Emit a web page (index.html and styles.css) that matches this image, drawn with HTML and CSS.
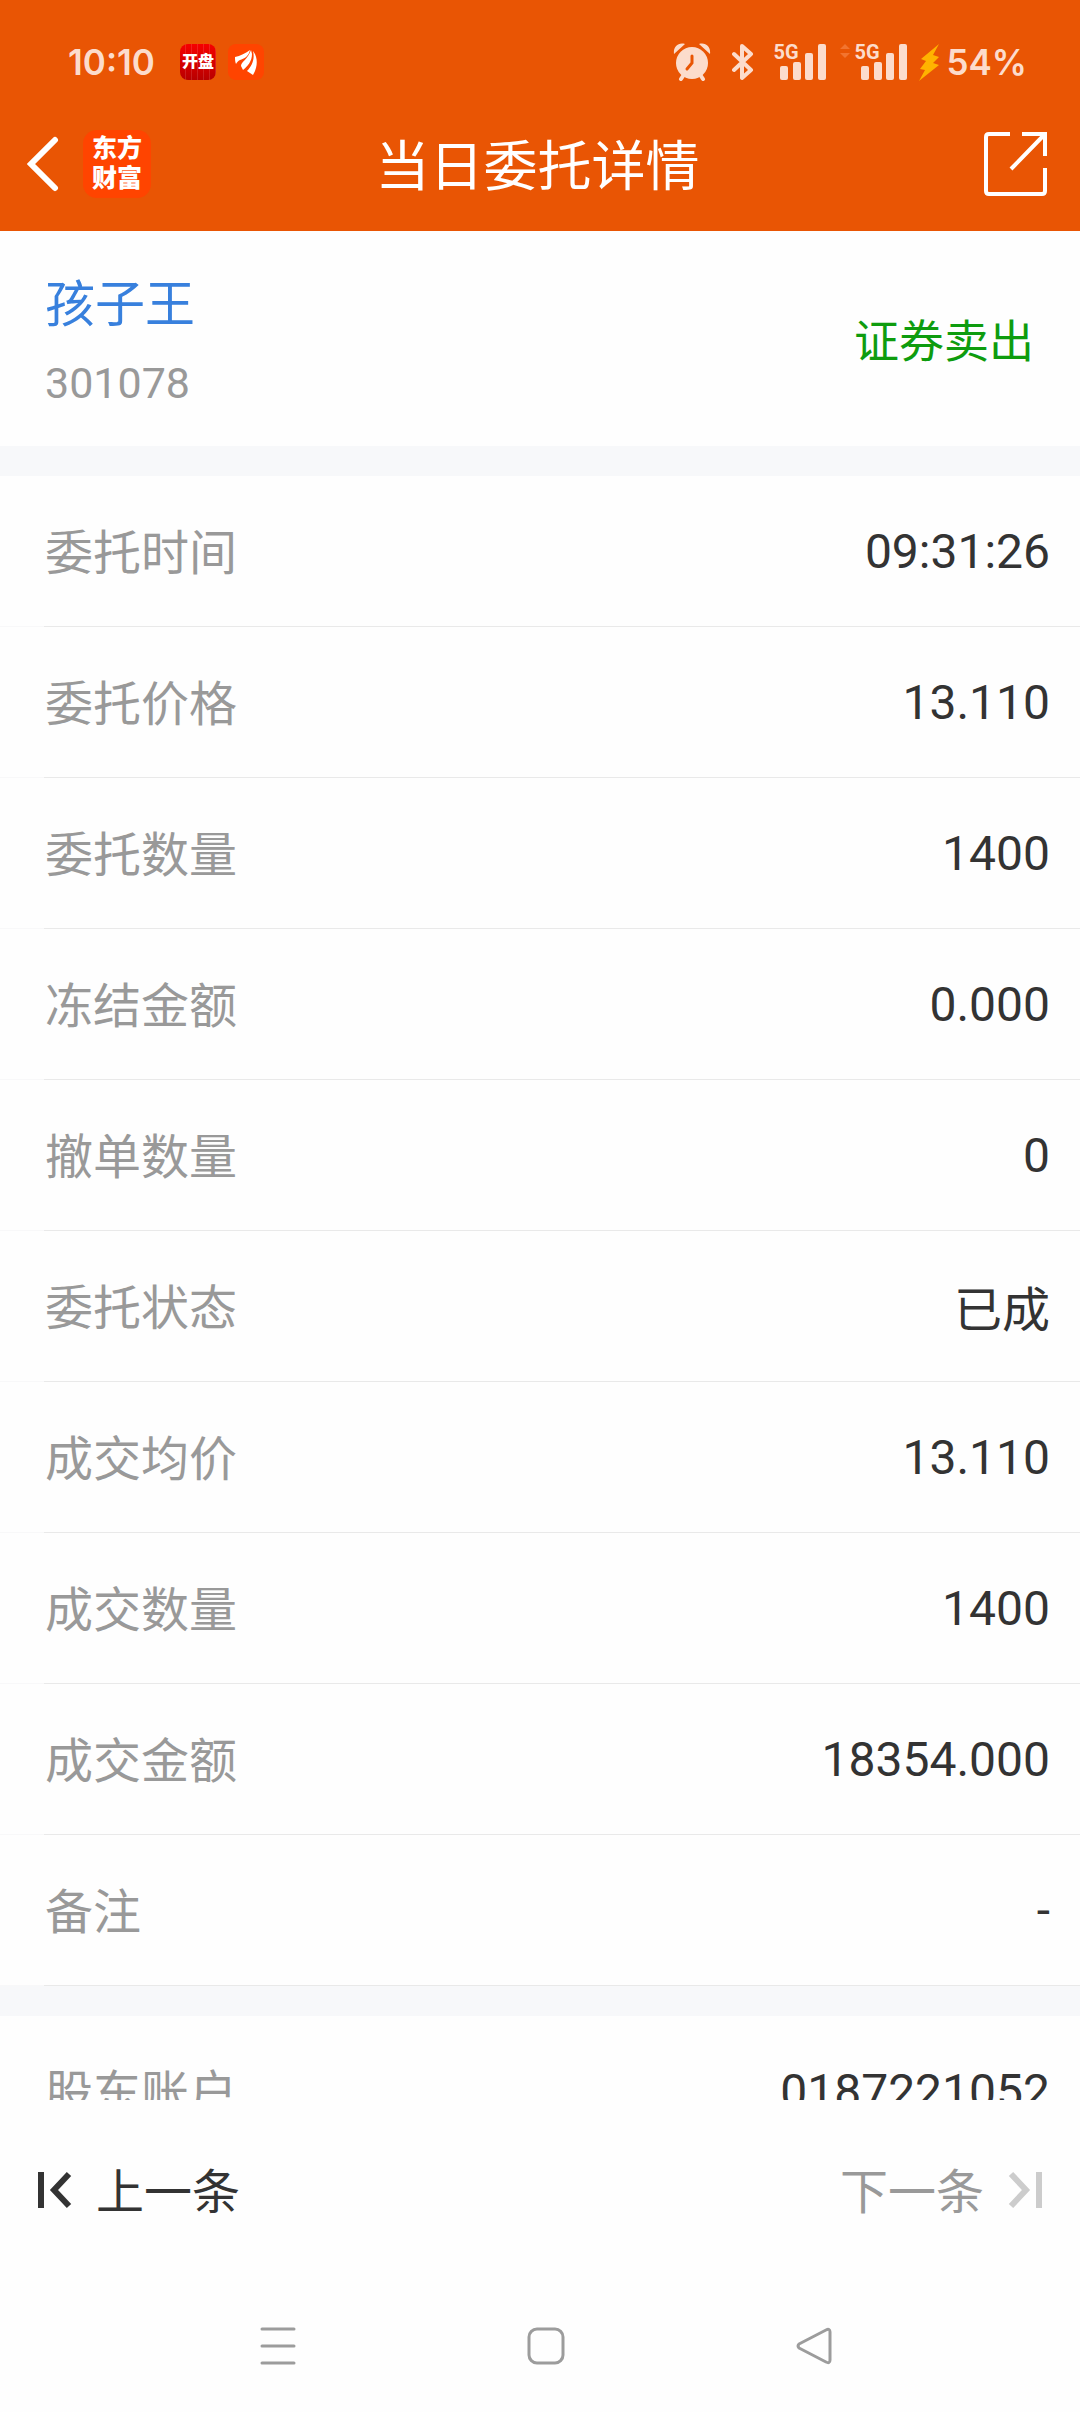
FILE: index.html
```html
<!DOCTYPE html>
<html lang="zh-CN">
<head>
  <meta charset="UTF-8">
  <meta name="viewport" content="width=device-width, initial-scale=1.0">
  <title>当日委托详情</title>
  <link rel="stylesheet" href="styles.css">
</head>
<body>
  <header class="top">
    <!-- phone status bar -->
    <div class="status-bar">
      <span class="status-time">10:10</span>
      <span class="app-badge kaipan">开盘</span>
      <span class="app-badge wing">
        <svg width="36" height="36" viewBox="0 0 36 36" fill="#fff">
          <path d="M7 13C12 12 18 9 22 6C21 12 16 15 12 16C10 17 9 18 8 20C7 18 7 15 7 13Z"/>
          <path d="M13 22C13 18 20 15 23 6L24 10C24 17 20 22 15 26Z"/>
          <path d="M25 7C30 13 30 23 25 31L19 27C24 22 27 15 25 7Z"/>
        </svg>
      </span>
      <div class="status-icons">
        <svg class="alarm" width="38" height="38" viewBox="0 0 38 38">
          <g fill="none" stroke="#fcdccc" stroke-linecap="round" stroke-width="4">
            <path d="M10 33L8 36M28 33L30 36"/>
          </g>
          <path fill="#fcdccc" d="M1 11C0 4 5-1 12 1ZM37 11C38 4 33-1 26 1Z"/>
          <circle cx="19" cy="20" r="16" fill="#fcdccc"/>
          <path d="M19 13V20L14 26" fill="none" stroke="#e95504" stroke-width="3" stroke-linecap="round"/>
        </svg>
        <svg class="bluetooth" width="22" height="38" viewBox="0 0 22 38" fill="none" stroke="#fcdccc" stroke-width="4" stroke-linecap="round" stroke-linejoin="round">
          <path d="M2 11L19 27L10 35V3L19 11L2 27"/>
        </svg>
        <div class="signal">
          <span class="net">5G</span>
          <svg width="52" height="38" viewBox="0 0 52 38" fill="#fcdccc">
            <rect x="6" y="23" width="8" height="14" rx="2"/>
            <rect x="19" y="19" width="8" height="18" rx="2"/>
            <rect x="31" y="10" width="8" height="27" rx="2"/>
            <rect x="44" y="1" width="8" height="36" rx="2"/>
          </svg>
        </div>
        <svg class="traffic" width="10" height="38" viewBox="0 0 10 38" fill="#f2742f">
          <path d="M5 1L10 6H0ZM0 10H10L5 15Z"/>
        </svg>
        <div class="signal">
          <span class="net">5G</span>
          <svg width="52" height="38" viewBox="0 0 52 38" fill="#fcdccc">
            <rect x="6" y="23" width="8" height="14" rx="2"/>
            <rect x="19" y="19" width="8" height="18" rx="2"/>
            <rect x="31" y="10" width="8" height="27" rx="2"/>
            <rect x="44" y="1" width="8" height="36" rx="2"/>
          </svg>
        </div>
        <svg class="bolt" width="20" height="38" viewBox="0 0 20 38" fill="#ffb300">
          <path d="M20 1L2 16L7 18L1 26L6 27L0 38L20 22L14 20L20 14L14 12Z"/>
        </svg>
        <span class="battery">54%</span>
      </div>
    </div>

    <nav class="title-bar">
      <div class="title-left">
        <button type="button" class="icon-btn" aria-label="返回">
          <svg width="32" height="56" viewBox="0 0 32 56" fill="none" stroke="#fff" stroke-width="6" stroke-linecap="round">
            <path d="M28 4L4 28L28 52"/>
          </svg>
        </button>
        <span class="brand">东方<br>财富</span>
      </div>
      <h1>当日委托详情</h1>
      <button type="button" class="icon-btn share" aria-label="分享">
        <svg width="64" height="64" viewBox="0 0 64 64" fill="none" stroke="#fff" stroke-width="4">
          <path d="M26 2H5Q2 2 2 5V59Q2 62 5 62H58Q61 62 61 59V36"/>
          <path d="M38 2H61V24M61 2L27 37"/>
        </svg>
      </button>
    </nav>
  </header>

  <main class="content">
    <section class="stock">
      <div class="stock-info">
        <a href="#" class="stock-name">孩子王</a>
        <p class="stock-code">301078</p>
      </div>
      <span class="direction">证券卖出</span>
    </section>

    <dl class="details">
      <div class="row"><dt>委托时间</dt><dd>09:31:26</dd></div>
      <div class="row"><dt>委托价格</dt><dd>13.110</dd></div>
      <div class="row"><dt>委托数量</dt><dd>1400</dd></div>
      <div class="row"><dt>冻结金额</dt><dd>0.000</dd></div>
      <div class="row"><dt>撤单数量</dt><dd>0</dd></div>
      <div class="row"><dt>委托状态</dt><dd>已成</dd></div>
      <div class="row"><dt>成交均价</dt><dd>13.110</dd></div>
      <div class="row"><dt>成交数量</dt><dd>1400</dd></div>
      <div class="row"><dt>成交金额</dt><dd>18354.000</dd></div>
      <div class="row"><dt>备注</dt><dd>-</dd></div>
    </dl>

    <dl class="details">
      <div class="row"><dt>股东账户</dt><dd>0187221052</dd></div>
    </dl>
  </main>

  <footer>
    <div class="pager">
      <button type="button">
        <svg width="34" height="38" viewBox="0 0 34 38" fill="none" stroke="#333" stroke-width="6">
          <path d="M3 1V37M31 3L16 19L31 35"/>
        </svg>
        <span>上一条</span>
      </button>
      <button type="button" disabled>
        <span>下一条</span>
        <svg width="34" height="38" viewBox="0 0 34 38" fill="none" stroke="#ccc" stroke-width="6">
          <path d="M31 1V37M3 3L18 19L3 35"/>
        </svg>
      </button>
    </div>

    <!-- system navigation keys -->
    <div class="system-nav">
      <button type="button" class="icon-btn" aria-label="菜单">
        <svg width="36" height="38" viewBox="0 0 36 38" fill="none" stroke="#9c9c9c" stroke-width="3" stroke-linecap="round">
          <path d="M2 2H34M2 19H34M2 36H34"/>
        </svg>
      </button>
      <button type="button" class="icon-btn" aria-label="主页">
        <svg width="38" height="38" viewBox="0 0 38 38" fill="none" stroke="#9c9c9c" stroke-width="3">
          <rect x="2" y="2" width="34" height="34" rx="8"/>
        </svg>
      </button>
      <button type="button" class="icon-btn" aria-label="后退">
        <svg width="36" height="38" viewBox="0 0 36 38" fill="none" stroke="#9c9c9c" stroke-width="3" stroke-linejoin="round">
          <path d="M30 3L3 17Q1 19 3 21L30 35Q34 37 34 33V5Q34 1 30 3Z"/>
        </svg>
      </button>
    </div>
  </footer>
</body>
</html>
```
FILE: styles.css
```css
* {
  box-sizing: border-box;
}
body {
  margin: 0;
  height: 100vh;
  display: flex;
  flex-direction: column;
  background: #fefefe;
  color: #333;
  font-family: Roboto, "Noto Sans CJK SC", sans-serif;
}
svg {
  display: block;
  flex-shrink: 0;
}
h1, p, dl, dd {
  margin: 0;
}
button {
  border: none;
  background: none;
  padding: 0;
  font-family: inherit;
  color: inherit;
  cursor: pointer;
}

/* orange header */
.top {
  background: #e95504;
  color: #fff;
  padding-top: 38px;
}
.status-bar {
  display: flex;
  align-items: center;
  height: 48px;
  padding: 0 53px 0 68px;
  color: #fcdccc;
}
.status-time, .battery {
  font-family: Inter, sans-serif;
  font-weight: 600;
  font-size: 35px;
  line-height: 48px;
}
.status-time {
  width: 112px;
}
.app-badge {
  width: 36px;
  height: 36px;
  margin-right: 12px;
  border-radius: 8px;
  overflow: hidden;
}
.kaipan {
  background:
    repeating-linear-gradient(90deg, transparent 0 5px, rgba(255, 255, 255, 0.12) 5px 6px),
    linear-gradient(#f60000, #b80000);
  color: #fff;
  font-size: 16px;
  font-weight: 900;
  line-height: 36px;
  text-align: center;
}
.wing {
  background: #ff4400;
}
.status-icons {
  display: flex;
  align-items: center;
  margin-left: auto;
}
.bluetooth {
  margin: 0 20px 0 21px;
}
.signal {
  position: relative;
}
/* network label sits over the short bars */
.net {
  position: absolute;
  top: 0;
  left: 0;
  font-size: 20px;
  font-weight: 700;
  line-height: 18px;
}
.traffic {
  margin: 0 5px 0 14px;
}
.bolt {
  margin: 0 8px 0 12px;
}

.title-bar {
  display: grid;
  grid-template-columns: 1fr auto 1fr;
  align-items: center;
  height: 145px;
  padding: 11px 32px 0 27px;
}
.title-left {
  display: flex;
  align-items: center;
  gap: 24px;
}
.title-bar h1 {
  padding-top: 8px;
  font-size: 54px;
  font-weight: 400;
  line-height: 64px;
}
.brand {
  width: 68px;
  height: 68px;
  padding: 4px 0;
  border-radius: 14px;
  background: #ff4400;
  font-size: 25px;
  font-weight: 900;
  line-height: 30px;
  text-align: center;
}
.share {
  justify-self: end;
}

.content {
  flex: 1;
  min-height: 0;
  overflow: hidden;
}
.stock {
  display: flex;
  justify-content: space-between;
  align-items: center;
  height: 215px;
  padding: 0 46px 0 45px;
}
.stock-info {
  padding-top: 8px;
}
.stock-name {
  display: block;
  color: #3880dd;
  font-size: 50px;
  line-height: 80px;
  text-decoration: none;
}
.stock-code {
  color: #999;
  font-size: 43px;
  line-height: 76px;
}
.direction {
  color: #0e9c0e;
  font-size: 45px;
}

.details {
  border-top: 30px solid #f7f8fa;
}
.row {
  display: flex;
  justify-content: space-between;
  align-items: center;
  height: 151px;
  padding: 0 30px 0 45px;
  border-bottom: 1px solid;
  border-image: linear-gradient(to right, #f8f8f9 45px, #e9e9e9 45px) 1;
  font-size: 48px;
}
.row dt {
  padding-bottom: 4px;
  color: #999;
}

.pager {
  display: flex;
  justify-content: space-between;
  height: 180px;
  padding: 0 38px;
}
.pager button {
  display: flex;
  align-items: center;
  gap: 24px;
  font-size: 48px;
}
.pager span {
  padding-bottom: 4px;
}
.pager button:disabled {
  color: #999;
  cursor: default;
}
.system-nav {
  display: grid;
  grid-template-columns: repeat(3, 1fr);
  height: 132px;
  padding: 0 132px 0 144px;
}
.system-nav .icon-btn {
  display: flex;
  align-items: center;
  justify-content: center;
}
```
